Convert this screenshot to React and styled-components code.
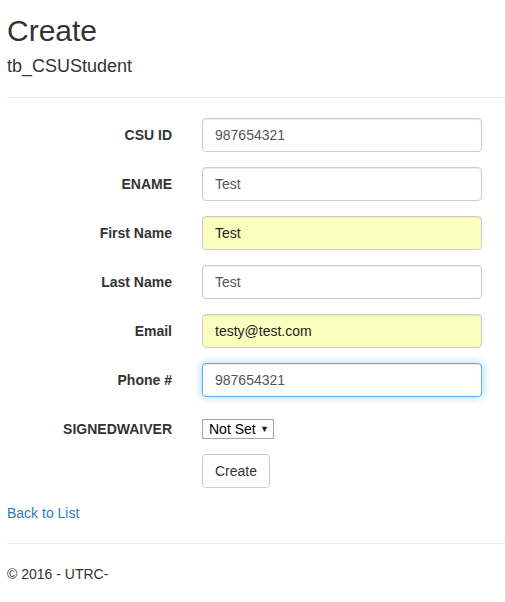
import React from 'react'
import styled, { createGlobalStyle } from 'styled-components'

const GlobalStyle = createGlobalStyle`
  * {
    box-sizing: border-box;
  }
  body {
    margin: 0;
    font-family: "Liberation Sans", Arial, Helvetica, sans-serif;
    font-size: 14px;
    line-height: 1.42857143;
    color: #333;
    background: #fff;
  }
`

const Page = styled.div`
  padding: 14px 0 0 7px;
`

const Title = styled.h2`
  margin: 0 0 10px;
  font-size: 30px;
  font-weight: 500;
  line-height: 1.1;
`

const Subtitle = styled.h4`
  margin: 10px 0 0;
  font-size: 18px;
  font-weight: 500;
  line-height: 1.1;
`

const Rule = styled.hr`
  margin: 20px 0;
  border: 0;
  border-top: 1px solid #eee;
`

const Form = styled.form`
  margin: 0;
`

const FormGroup = styled.div`
  display: grid;
  grid-template-columns: 165px 280px;
  column-gap: 30px;
  margin-bottom: 15px;
`

const Label = styled.label`
  padding-top: 7px;
  text-align: right;
  font-weight: 700;
  white-space: nowrap;
`

const Input = styled.input`
  display: block;
  width: 280px;
  height: 34px;
  padding: 6px 12px;
  font: inherit;
  font-size: 14px;
  line-height: 1.42857143;
  color: ${({ $autofill }) => ($autofill ? '#222' : '#555')};
  background: ${({ $autofill }) => ($autofill ? '#faffbd' : '#fff')};
  border: 1px solid ${({ $focused }) => ($focused ? '#66afe9' : '#ccc')};
  border-radius: 4px;
  outline: 0;
  box-shadow: ${({ $focused }) =>
    $focused
      ? 'inset 0 1px 1px rgba(0,0,0,.075), 0 0 8px rgba(102,175,233,.6)'
      : 'inset 0 1px 1px rgba(0,0,0,.075)'};
`

const SelectBox = styled.div`
  display: inline-flex;
  align-items: center;
  margin-top: 7px;
  height: 20px;
  border: 1px solid #a6a6a6;
  background: #fff;
  justify-self: start;
`

const Select = styled.select`
  appearance: none;
  border: 0;
  outline: 0;
  background: transparent;
  font-family: inherit;
  font-size: 14px;
  color: #000;
  padding: 0 0 0 6px;
  height: 18px;
  line-height: 18px;
`

const Arrow = styled.span`
  font-size: 9px;
  color: #222;
  padding: 0 4px 0 4px;
  line-height: 18px;
`

const Button = styled.button`
  justify-self: start;
  height: 34px;
  padding: 6px 12px;
  font: inherit;
  font-size: 14px;
  color: #333;
  background: #fff;
  border: 1px solid #ccc;
  border-radius: 4px;
`

const BackLink = styled.a`
  color: #337ab7;
  text-decoration: none;
`

const Footer = styled.footer`
  p {
    margin: 0 0 10px;
  }
`

const fields = [
  { label: 'CSU ID', value: '987654321' },
  { label: 'ENAME', value: 'Test' },
  { label: 'First Name', value: 'Test', autofill: true },
  { label: 'Last Name', value: 'Test' },
  { label: 'Email', value: 'testy@test.com', autofill: true },
  { label: 'Phone #', value: '987654321', focused: true },
]

const App = () => (
  <Page>
    <GlobalStyle />
    <Title>Create</Title>
    <Subtitle>tb_CSUStudent</Subtitle>
    <Rule />
    <Form onSubmit={(e) => e.preventDefault()}>
      {fields.map((f) => (
        <FormGroup key={f.label}>
          <Label>{f.label}</Label>
          <Input
            defaultValue={f.value}
            $autofill={f.autofill}
            $focused={f.focused}
          />
        </FormGroup>
      ))}
      <FormGroup>
        <Label>SIGNEDWAIVER</Label>
        <SelectBox>
          <Select defaultValue="">
            <option value="">Not Set</option>
            <option value="true">True</option>
            <option value="false">False</option>
          </Select>
          <Arrow>▼</Arrow>
        </SelectBox>
      </FormGroup>
      <FormGroup>
        <span />
        <Button type="submit">Create</Button>
      </FormGroup>
    </Form>
    <div>
      <BackLink href="#">Back to List</BackLink>
    </div>
    <Rule />
    <Footer>
      <p>© 2016 - UTRC-</p>
    </Footer>
  </Page>
)

export default App
